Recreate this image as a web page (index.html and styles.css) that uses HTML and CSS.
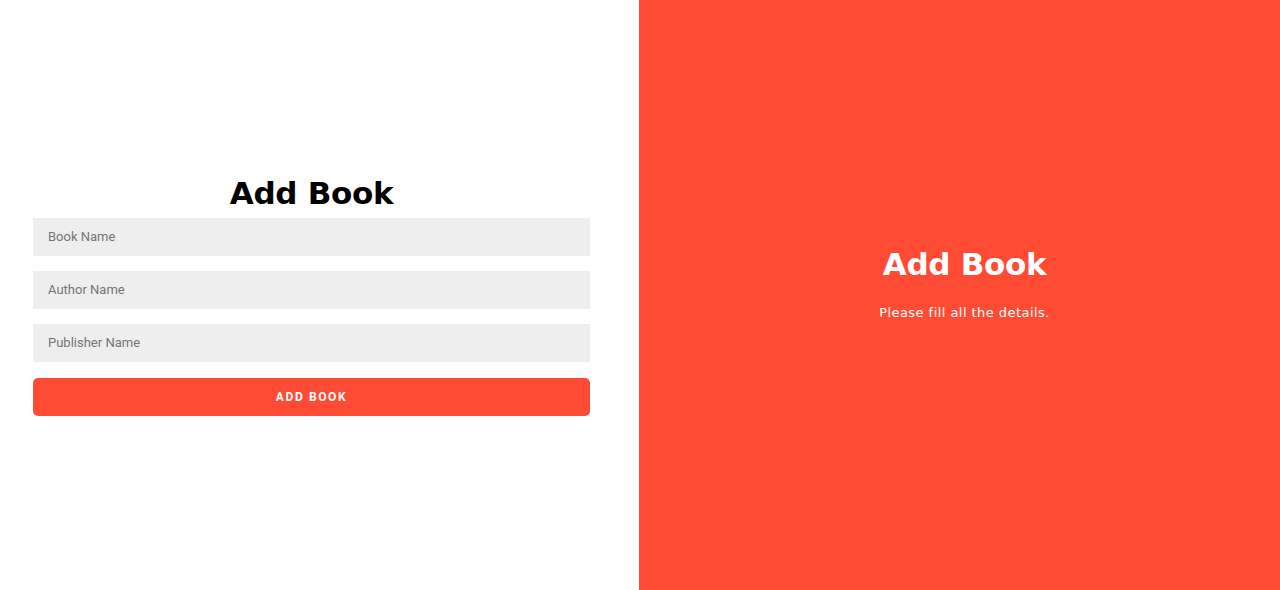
FILE: index.html
```html
<!DOCTYPE html>
<html lang="en">
<head>
<meta charset="utf-8">
<title>Add Book</title>
<link rel="stylesheet" href="styles.css">
</head>
<body>
<div class="page">
  <section class="form-panel">
    <form class="book-form">
      <h1 class="form-title">Add Book</h1>
      <input class="field" type="text" placeholder="Book Name">
      <input class="field" type="text" placeholder="Author Name">
      <input class="field field-last" type="text" placeholder="Publisher Name">
      <button class="submit" type="button">ADD BOOK</button>
    </form>
  </section>
  <section class="info-panel">
    <h2 class="info-title">Add Book</h2>
    <p class="info-text">Please fill all the details.</p>
  </section>
</div>
</body>
</html>
```
FILE: styles.css
```css
* { box-sizing: border-box; }
html, body { margin: 0; padding: 0; height: 100%; }
body { font-family: Roboto, "Liberation Sans", sans-serif; background: #fff; }
.page { display: flex; height: 590px; }
.form-panel {
  width: 639px;
  display: flex;
  align-items: center;
  padding-left: 33px;
  background: #fff;
}
.book-form { width: 557px; display: flex; flex-direction: column; }
.form-title {
  margin: 0 0 7px;
  text-align: center;
  font-family: "DejaVu Sans", sans-serif;
  font-weight: 700;
  font-size: 31px;
  line-height: 36px;
  color: #000;
  letter-spacing: -0.3px;
}
.field {
  height: 38px;
  border: none;
  background: #eeeeee;
  padding: 0 15px;
  margin-bottom: 15px;
  font-family: Roboto, "Liberation Sans", sans-serif;
  font-size: 13px;
  color: #333;
  outline: none;
}
.field-last { margin-bottom: 16px; }
.field::placeholder { color: #757575; }
.submit {
  height: 38px;
  border: none;
  border-radius: 5px;
  background: #ff4b33;
  color: #fff;
  font-family: Roboto, "Liberation Sans", sans-serif;
  font-weight: 700;
  font-size: 12px;
  letter-spacing: 1.6px;
}
.info-panel {
  flex: 1;
  background: #ff4b33;
  color: #fff;
  display: flex;
  flex-direction: column;
  align-items: center;
  justify-content: center;
  padding-left: 10px;
  padding-bottom: 26px;
}
.info-title {
  margin: 0;
  font-family: "DejaVu Sans", sans-serif;
  font-weight: 700;
  font-size: 31px;
  line-height: 38px;
  letter-spacing: -0.3px;
}
.info-text {
  margin: 22px 0 0;
  font-family: "DejaVu Sans", sans-serif;
  font-size: 13px;
  letter-spacing: 0.45px;
}
```
